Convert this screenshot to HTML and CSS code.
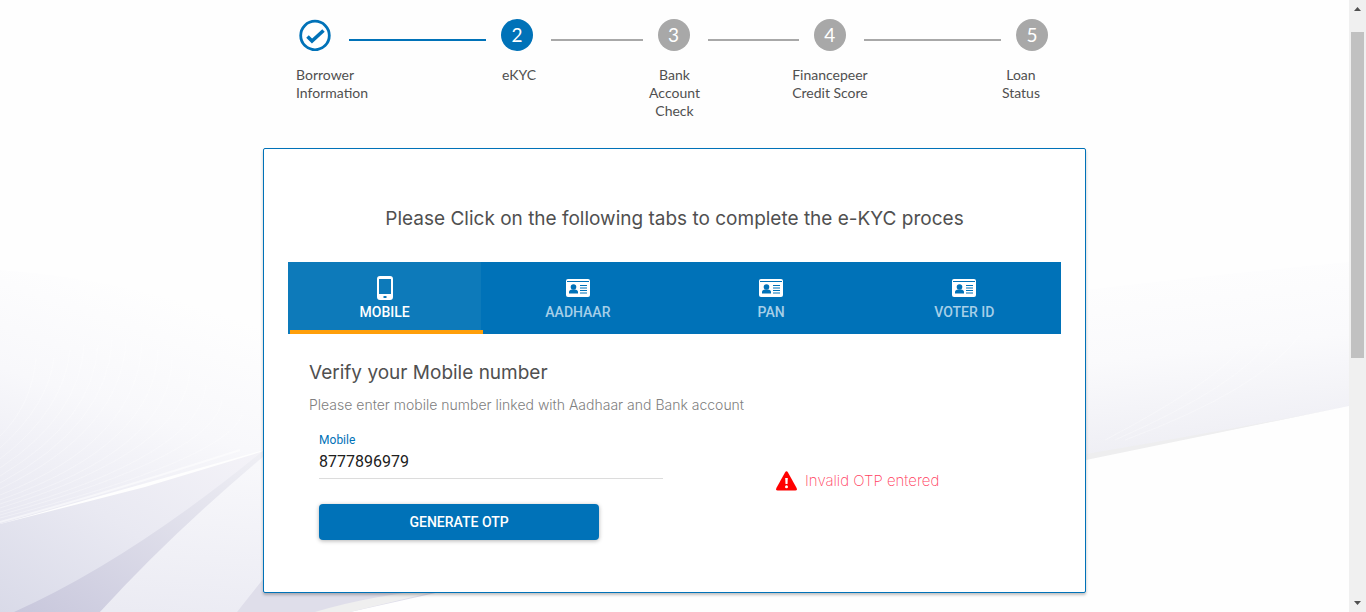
FILE: index.html
```html
<!DOCTYPE html>
<html lang="en">
<head>
<meta charset="utf-8">
<meta name="viewport" content="width=device-width, initial-scale=1">
<title>eKYC</title>
<link rel="stylesheet" href="styles.css">
</head>
<body>
<svg width="0" height="0" class="sprite" aria-hidden="true">
  <symbol id="id-card" viewBox="0 0 24 18">
    <rect width="24" height="18" rx="2" fill="#fff"/>
    <path d="M1 2.500h22" stroke="#0072b8" stroke-width="1"/>
    <circle cx="7.500" cy="8" r="2.800" fill="#0072b8"/>
    <path d="M3 14.500V13c0-1.500 1.500-2.500 3-2.500h3c1.500 0 3 1 3 2.500v1.500z" fill="#0072b8"/>
    <path d="M14 6.500h7M14 9h7M14 11.500h7M14 14h7" stroke="#0072b8" stroke-width="1"/>
  </symbol>
</svg>
<div class="page">
  <svg class="backdrop" viewBox="0 0 1349 612" preserveAspectRatio="none" aria-hidden="true">
    <defs>
      <linearGradient id="haze" x1="0.35" y1="0" x2="0" y2="1">
        <stop offset="0" stop-color="#fefefe"/><stop offset="0.45" stop-color="#f8f8fb"/><stop offset="1" stop-color="#e7e7f1"/>
      </linearGradient>
      <linearGradient id="facet" x1="1" y1="0" x2="0" y2="1">
        <stop offset="0" stop-color="#f4f3f8"/><stop offset="0.5" stop-color="#e9e9f2"/><stop offset="1" stop-color="#d9dae8"/>
      </linearGradient>
      <linearGradient id="shade" x1="1" y1="0" x2="0" y2="1">
        <stop offset="0" stop-color="#f0f0f5"/><stop offset="1" stop-color="#c8c7dc"/>
      </linearGradient>
      <linearGradient id="pale" x1="0.3" y1="0" x2="0.2" y2="1">
        <stop offset="0" stop-color="#f8f8fb"/><stop offset="1" stop-color="#ebebf3"/>
      </linearGradient>
      <linearGradient id="right" x1="0" y1="0" x2="0.15" y2="1">
        <stop offset="0" stop-color="#fefefe"/><stop offset="0.5" stop-color="#fafafc"/><stop offset="1" stop-color="#eeeef4"/>
      </linearGradient>
    </defs>
    <path d="M0 270Q140 280 264 330V450L0 524z" fill="url(#haze)"/>
    <g fill="none" stroke="#fff" stroke-opacity="0.3">
      <path d="M0 436Q32 405 36 358M0 448Q48 405 54 358M0 459Q64 410 70 350M0 468Q80 415 84 345M0 476Q94 420 98 345M0 483Q108 425 112 340M0 489Q122 430 126 340M0 495Q140 440 142 340M0 500Q155 445 158 350M0 504Q170 450 172 360M0 508Q186 450 190 370M0 512Q200 455 206 385M0 515Q215 455 222 400M0 518Q225 460 242 415"/>
    </g>
    <path d="M0 612V524L145 487 264 451V612z" fill="url(#facet)"/>
    <path d="M0 522Q100 495 240 450" fill="none" stroke="#fff" stroke-width="2" stroke-opacity="0.5"/>
    <path d="M14 612Q130 560 264 450V458L100 612z" fill="url(#shade)"/>
    <path d="M100 612Q170 535 264 456V612z" fill="url(#pale)"/>
    <path d="M237 612L264 578V592H440L350 612z" fill="#dfdeea"/>
    <path d="M315 612Q375 594 450 588L350 612z" fill="#efefef"/>
    <path d="M1086 290Q1210 275 1349 262V406L1086 459z" fill="url(#right)"/>
    <path d="M1086 454Q1230 430 1349 406L1086 460z" fill="#eeeeef"/>
    <path d="M1105 440Q1210 385 1240 350M1115 440Q1240 385 1270 340M1125 440Q1260 390 1300 335" fill="none" stroke="#fff" stroke-opacity="0.3"/>
  </svg>
  <main class="content">
    <nav class="stepper" aria-label="Progress">
      <div class="track">
        <svg class="done" viewBox="0 0 32 32" role="img" aria-label="Completed">
          <circle cx="16" cy="16.500" r="14.300" fill="#fff" stroke="#0072b8" stroke-width="2.800"/>
          <path d="M8.500 17.500L13 22L24.500 11.500" fill="none" stroke="#0072b8" stroke-width="3.600"/>
        </svg>
        <span class="line long current"></span>
        <span class="dot current">2</span>
        <span class="line"></span>
        <span class="dot">3</span>
        <span class="line"></span>
        <span class="dot">4</span>
        <span class="line long"></span>
        <span class="dot">5</span>
      </div>
      <ol class="labels">
        <li><span>Borrower<br>Information</span></li>
        <li><span>eKYC</span></li>
        <li><span>Bank<br>Account<br>Check</span></li>
        <li><span>Financepeer<br>Credit Score</span></li>
        <li><span>Loan<br>Status</span></li>
      </ol>
    </nav>
    <section class="card">
      <h1>Please Click on the following tabs to complete the e-KYC proces</h1>
      <div class="tabs" role="tablist">
        <button class="tab active" role="tab" aria-selected="true">
          <svg class="phone" viewBox="0 0 16 24" aria-hidden="true"><path fill="#fff" fill-rule="evenodd" d="M3 0h10a3 3 0 0 1 3 3v18a3 3 0 0 1-3 3H3a3 3 0 0 1-3-3V3a3 3 0 0 1 3-3zM2 3v15h12V3zM6.500 20v2h3v-2z"/></svg>
          MOBILE</button>
        <button class="tab" role="tab"><svg class="card-icon" aria-hidden="true"><use href="#id-card"/></svg>AADHAAR</button>
        <button class="tab" role="tab"><svg class="card-icon" aria-hidden="true"><use href="#id-card"/></svg>PAN</button>
        <button class="tab" role="tab"><svg class="card-icon" aria-hidden="true"><use href="#id-card"/></svg>VOTER ID</button>
        <span class="indicator"></span>
      </div>
      <div class="panel" role="tabpanel">
        <h2>Verify your Mobile number</h2>
        <p class="hint">Please enter mobile number linked with Aadhaar and Bank account</p>
        <form class="form">
          <div class="entry">
            <label for="mobile">Mobile</label>
            <input id="mobile" type="tel" value="8777896979">
            <button class="submit" type="button">GENERATE OTP</button>
          </div>
          <p class="error" role="alert">
            <svg viewBox="0 0 21 20" aria-hidden="true"><path d="M9 1.500Q10.500-.8 12 1.500L20.600 17Q21.500 19.500 19.300 19.500H1.700Q-.5 19.500.4 17z" fill="#f00"/><path d="M9.200 7h2.600l-.3 6h-2z" fill="#fff"/><circle cx="10.500" cy="15.700" r="1.500" fill="#fff"/></svg>
            Invalid OTP entered</p>
        </form>
      </div>
    </section>
  </main>
</div>
<div class="scrollbar" aria-hidden="true">
  <svg viewBox="0 0 17 17"><path d="M5 11L8.500 7 12 11z" fill="#505050"/></svg>
  <span class="thumb"></span>
  <svg viewBox="0 0 17 17"><path d="M5 6L8.500 10 12 6z" fill="#505050"/></svg>
</div>
</body>
</html>
```
FILE: styles.css
```css
* { box-sizing: border-box; }
body {
  margin: 0;
  display: flex;
  min-height: 100vh;
  background: #fefefe;
  font-family: Roboto, "Liberation Sans", sans-serif;
}
.sprite { position: absolute; }
.page { position: relative; flex: 1; }
.backdrop {
  position: absolute;
  inset: 0;
  width: 100%;
  height: 100%;
}
.content {
  position: relative;
  width: 61%;
  min-width: 640px;
  margin: 0 auto;
  padding: 19px 0 16px;
}
.track {
  display: flex;
  align-items: center;
  padding: 0 38px 0 36px;
}
.done, .dot { width: 32px; height: 32px; flex: none; }
.dot {
  border-radius: 50%;
  background: #a8a8a8;
  color: #fff;
  font: 19px/32px Lato, sans-serif;
  text-align: center;
}
.line {
  flex: 2;
  height: 2px;
  margin: 10px 15px 0 18px;
  background: #a8a8a8;
}
.line.long { flex: 3; }
.dot.current, .line.current { background: #0072b8; }
.labels {
  display: grid;
  grid-template-columns: 138fr 236fr 75fr 236fr 138fr;
  justify-items: center;
  margin: 15px 0 28px;
  padding: 0;
  list-style: none;
  color: #505050;
  font: 14px/18px Lato, sans-serif;
  text-align: center;
}
.labels li:first-child { text-align: left; }
.labels li:last-child { padding-left: 8px; }
.card {
  padding: 55px 24px 52px;
  border: 1px solid #0072b8;
  border-radius: 2px;
  background: #fff;
  box-shadow: 0 2px 3px rgba(0, 0, 0, 0.25);
}
h1, h2, p { margin: 0; font-family: Inter, "Open Sans", sans-serif; }
h1, h2 {
  color: #505050;
  font-size: 19px;
  line-height: 30px;
  font-weight: 400;
}
h1 { text-align: center; }
.tabs {
  position: relative;
  display: grid;
  grid-template-columns: repeat(4, 1fr);
  margin-top: 28px;
  background: #0072b8;
}
button { border: 0; font: 500 14px/20px Roboto, sans-serif; }
.tab {
  display: flex;
  flex-direction: column;
  align-items: center;
  gap: 2px;
  height: 72px;
  padding: 14px 0 0;
  background: transparent;
  color: #a6cfe8;
}
.tab.active { background: #0d7aba; color: #fff; }
.phone { width: 16px; height: 24px; }
.card-icon { width: 24px; height: 18px; margin: 3px 0; }
.indicator {
  position: absolute;
  left: 2px;
  bottom: 0;
  width: 25%;
  height: 4px;
  background: #ff9f0a;
}
.panel { padding: 24px 0 0 21px; }
.hint {
  margin-top: 7px;
  color: #808080;
  font-size: 14px;
  line-height: 20px;
  font-weight: 300;
}
.form {
  display: grid;
  grid-template-columns: 47% 1fr;
  column-gap: 113px;
  align-items: center;
  padding: 17px 10px 0;
}
label {
  display: block;
  color: #0072b8;
  font-size: 12px;
  line-height: 16px;
}
input {
  display: block;
  width: 100%;
  height: 31px;
  padding: 1px 0 5px;
  border: 0;
  border-bottom: 1px solid #dcdcdc;
  background: transparent;
  color: #202020;
  font: 16px/24px Roboto, sans-serif;
}
.submit {
  display: block;
  width: 280px;
  height: 36px;
  margin-top: 25px;
  border-radius: 4px;
  background: #0072b8;
  color: #fff;
  box-shadow: 0 1px 4px rgba(0, 0, 0, 0.3);
}
.error {
  display: flex;
  align-items: center;
  gap: 8px;
  margin-bottom: 10px;
  color: #ff4060;
  font-size: 15px;
  line-height: 20px;
  font-weight: 200;
  white-space: nowrap;
}
.error svg { width: 21px; height: 20px; }
.scrollbar {
  display: flex;
  flex-direction: column;
  width: 17px;
  height: 100vh;
  background: #f0f0f0;
}
.scrollbar svg { width: 17px; height: 17px; }
.thumb {
  height: 326px;
  margin: 15px 2px auto;
  background: #c1c1c1;
}
```
